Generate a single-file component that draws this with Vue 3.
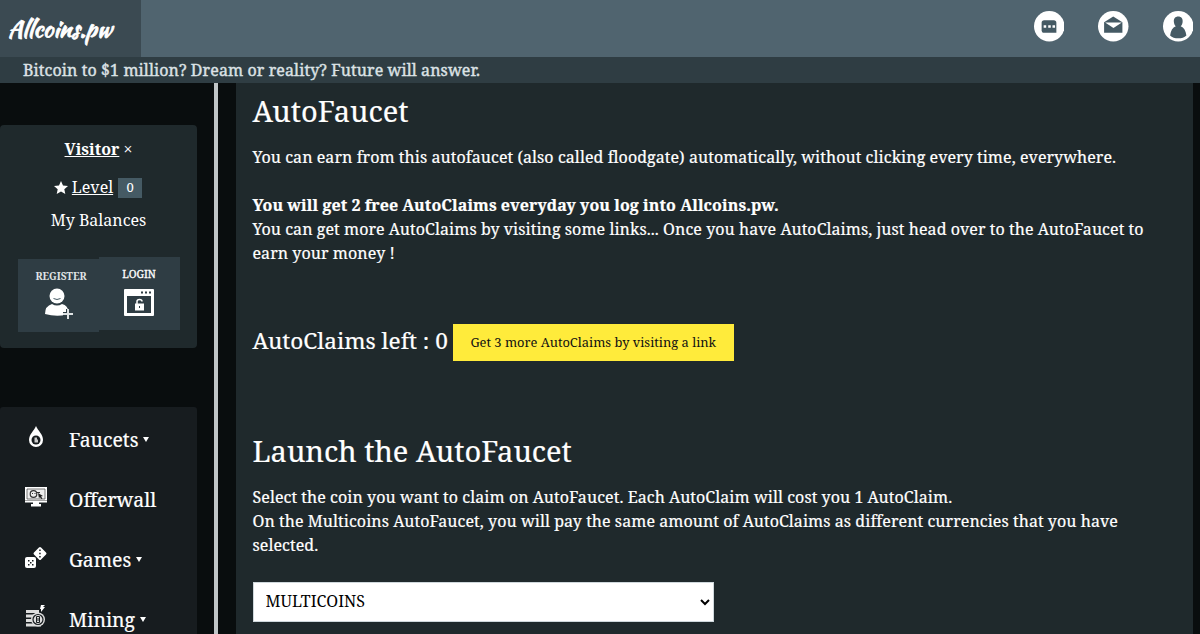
<template>
    <div class="page">
        <header class="topbar">
            <a class="logo"><span>Allcoins.pw</span></a>
            <nav class="actions">
                <svg viewBox="0 0 30 30">
                    <circle cx="15" cy="15" r="15" fill="#fff" />
                    <path d="M10 9h9.500q2.500 0 2.500 2.500v10h-12q-2.500 0-2.500-2.500v-7.500q0-2.500 2.500-2.500z" fill="#455a64" />
                    <path d="M9.500 14h2.500v2.500h-2.500zM14 14h2.500v2.500h-2.500zM18.200 14h2.500v2.500h-2.500z" fill="#fff" />
                </svg>
                <svg viewBox="0 0 30 30">
                    <circle cx="15" cy="15" r="15" fill="#fff" />
                    <path d="M6 11l9-5.500 9 5.500v10.500h-18z" fill="#455a64" />
                    <path d="M7 11.300h16.500l-8.300 5.500z" fill="#fff" />
                </svg>
                <svg viewBox="0 0 30 30">
                    <circle cx="15" cy="15" r="15" fill="#fff" />
                    <path d="M15 5.500c-3 0-4.700 2.200-4.300 5.200.2 1.800.8 3.300 1.900 4.300-3.200 1.300-5 4.500-5.600 9 3.500 3.800 12.500 3.800 16 0-.6-4.500-2.400-7.700-5.600-9 1.100-1 1.700-2.500 1.900-4.300.4-3-1.300-5.200-4.300-5.200z" fill="#455a64" />
                </svg>
            </nav>
        </header>
        <div class="ticker"><span>Bitcoin to $1 million? Dream or reality? Future will answer.</span></div>

        <div class="body">
            <aside class="sidebar">
                <section class="user">
                    <p class="visitor"><b>Visitor</b> <span>×</span></p>
                    <p class="level">
                        <svg viewBox="0 0 14 13"><path d="M7 0l2 4.500 5 .5-3.700 3.300 1 4.700-4.300-2.500-4.300 2.500 1-4.700-3.700-3.300 5-.5z" fill="#fff" /></svg>
                        <u>Level</u>
                        <span class="badge">0</span>
                    </p>
                    <p class="balances">My Balances</p>
                    <div class="auth">
                        <a class="register">
                            <span>REGISTER</span>
                            <svg viewBox="0 0 30 32">
                                <ellipse cx="13" cy="8" rx="7.500" ry="7.500" fill="#fff" />
                                <path d="M9.500 10.500q3.500 2 7 0" stroke="#455a64" fill="none" />
                                <path d="M1 26q0-8 7-10 5 3 10 0 6 1.500 6.500 8h-2.500v3q-11 2-21-1z" fill="#fff" />
                                <path d="M24 21v10M19 26h10" stroke="#2f3d44" stroke-width="4" />
                                <path d="M24 21v10M19 26h10" stroke="#dfe3e5" stroke-width="2" />
                            </svg>
                        </a>
                        <a class="login">
                            <span>LOGIN</span>
                            <svg viewBox="0 0 30 27">
                                <rect width="30" height="27" rx="1" fill="#fff" />
                                <path d="M3 7h24v17h-24z" fill="#2f3d44" />
                                <path d="M17 2.500h2v2h-2zM21 2.500h2v2h-2zM25 2.500h2v2h-2z" fill="#2f3d44" />
                                <path d="M11 14.500h9v7h-9z" fill="#fff" />
                                <path d="M13 15v-2.500q0-2 2.500-2t2.500 2" fill="none" stroke="#fff" stroke-width="1.500" />
                                <path d="M15 17h1v2h-1z" fill="#2f3d44" />
                            </svg>
                        </a>
                    </div>
                </section>

                <ul class="menu">
                    <li v-for="item in menu" :key="item.name">
                        <svg v-if="item.icon === 'drop'" viewBox="0 0 24 24">
                            <path d="M12 1c2 5 7 8 7 14a7 7 0 0 1-14 0c0-6 5-9 7-14z" fill="#fff" />
                            <circle cx="12" cy="15" r="4.500" fill="#171c1f" />
                            <path d="M10.500 12.500h2.500v2h1v3h-3.500z" fill="#ccc" />
                        </svg>
                        <svg v-else-if="item.icon === 'screen'" viewBox="0 0 24 24">
                            <path d="M1 2h22v15.500h-22zM9 17h6v2h2v2.500h-10v-2.500h2z" fill="#fff" />
                            <path d="M3 4h18v10h-18z" fill="#eee" stroke="#555" stroke-width=".8" />
                            <circle cx="9.500" cy="9" r="3.300" fill="none" stroke="#333" stroke-width="1.200" />
                            <path d="M8 8.500h1M10.500 8.500h1M13 7.500h3" stroke="#333" />
                            <path d="M14 8l5 3-2 .5 1.500 2-1.200.5-1.500-2-.8 1.500z" fill="#222" />
                            <path d="M1 15.500h22" stroke="#888" stroke-width=".8" />
                        </svg>
                        <svg v-else-if="item.icon === 'dice'" viewBox="0 0 24 24">
                            <rect x="1" y="12" width="11" height="11" rx="2" fill="#fff" />
                            <rect x="11" y="3.500" width="10" height="10" rx="1.500" transform="rotate(45 16 8.500)" fill="#fff" />
                            <path d="M4 15h1.500v1.500h-1.500zM8 15h1.500v1.500h-1.500zM4 19h1.500v1.500h-1.500zM8 19h1.500v1.500h-1.500zM6 17h1.500v1.500h-1.500zM15.200 4.500h1.500v1.500h-1.500zM15.200 7.800h1.500v1.500h-1.500zM15.200 11h1.500v1.500h-1.500z" fill="#171c1f" />
                        </svg>
                        <svg v-else viewBox="0 0 24 24">
                            <path d="M2 5h13v3h-13zM2 9.500h13v3h-13zM2 14h13v3h-13zM2 18.500h15v3h-15z" fill="#ddd" />
                            <circle cx="14" cy="14.500" r="7" fill="#ddd" />
                            <circle cx="14" cy="14.500" r="5" fill="none" stroke="#171c1f" stroke-width="1.200" />
                            <path d="M12.500 11.500h3v6h-3zM14 13v3" fill="none" stroke="#171c1f" />
                            <path d="M17 0h4l-2 2h2l-4 5v-3h-1z" fill="#fff" />
                        </svg>
                        <span>{{ item.name }}</span>
                        <i v-if="item.sub"></i>
                    </li>
                </ul>
            </aside>

            <main class="content">
                <h2>AutoFaucet</h2>
                <div class="text">
                    <p>You can earn from this autofaucet (also called floodgate) automatically, without clicking every time, everywhere.</p>
                    <p>&nbsp;</p>
                    <p><b>You will get 2 free AutoClaims everyday you log into Allcoins.pw.</b></p>
                    <p>You can get more AutoClaims by visiting some links... Once you have AutoClaims, just head over to the AutoFaucet to</p>
                    <p>earn your money !</p>
                </div>
                <div class="claims">
                    <h3>AutoClaims left : 0</h3>
                    <button>Get 3 more AutoClaims by visiting a link</button>
                </div>
                <h2>Launch the AutoFaucet</h2>
                <div class="text">
                    <p>Select the coin you want to claim on AutoFaucet. Each AutoClaim will cost you 1 AutoClaim.</p>
                    <p>On the Multicoins AutoFaucet, you will pay the same amount of AutoClaims as different currencies that you have</p>
                    <p>selected.</p>
                </div>
                <select v-model="coin">
                    <option>MULTICOINS</option>
                </select>
            </main>
        </div>
    </div>
</template>

<script setup>
import { ref } from "vue";

const coin = ref("MULTICOINS");
const menu = [
    { name: "Faucets", icon: "drop", sub: true },
    { name: "Offerwall", icon: "screen", sub: false },
    { name: "Games", icon: "dice", sub: true },
    { name: "Mining", icon: "coin", sub: true },
];
</script>

<style>
body {
    margin: 0;
    overflow: hidden;
    background: #090d0e;
}
</style>

<style scoped>
.page {
    height: 634px;
    overflow: hidden;
    display: flex;
    flex-direction: column;
    color: #fff;
    font-family: "Noto Serif", "Droid Serif", "DejaVu Serif Condensed", "DejaVu Serif", serif;
    font-stretch: condensed;
    font-size: 16px;
    white-space: nowrap;
}
p,
h2,
h3,
ul {
    margin: 0;
    padding: 0;
    font-weight: normal;
}
.topbar {
    height: 57px;
    flex: none;
    display: flex;
    justify-content: space-between;
    background: #50646f;
}
.logo {
    width: 141px;
    box-sizing: border-box;
    padding-left: 8px;
    background: #3b4a52;
}
.logo span {
    font: 400 23px/58px "Kaushan Script", Lato, sans-serif;
    letter-spacing: 0.150px;
    -webkit-text-stroke: 0.8px #fff;
}
.actions {
    display: flex;
    gap: 34px;
    padding: 11px 7px 0 0;
}
.actions svg {
    width: 30.500px;
    height: 30.500px;
}
.ticker {
    height: 26px;
    flex: none;
    padding-left: 23px;
    background: #2f3d43;
    color: #dce2e5;
    line-height: 26px;
    letter-spacing: 0.100px;
    -webkit-text-stroke: 0.4px #dce2e5;
}
.body {
    flex: 1;
    display: flex;
    min-height: 0;
}
.sidebar {
    width: 214px;
    flex: none;
    border-right: 4.500px solid #c0c5c7;
}
.user {
    width: 197px;
    height: 223px;
    margin-top: 42px;
    box-sizing: border-box;
    padding-top: 12px;
    border-radius: 4px;
    background: #1f292c;
    text-align: center;
}
.visitor {
    line-height: 24px;
}
.visitor b {
    text-decoration: underline;
}
.level {
    display: flex;
    align-items: center;
    justify-content: center;
    height: 24px;
    margin: 14px 1px 0 0;
}
.level svg {
    width: 14px;
    height: 13px;
    margin-right: 4px;
}
.badge {
    width: 24px;
    height: 20px;
    margin: 2px 0 0 5px;
    background: #455a64;
    font-size: 13px;
    line-height: 19px;
}
.balances {
    margin-top: 9px;
    line-height: 24px;
}
.auth {
    display: flex;
    margin: 25px 0 0 18px;
}
.auth a {
    display: flex;
    flex-direction: column;
    align-items: center;
    width: 81px;
    height: 73px;
    background: #2f3d44;
    font-size: 10px;
}
.auth span {
    margin-top: 10px;
    line-height: 14px;
}
.auth .register {
    height: 73px;
    margin-top: 2px;
    font-weight: bold;
    color: #dfe3e5;
}
.register span {
    margin-left: 5px;
}
.register svg {
    width: 30px;
    height: 32px;
    margin-top: 5px;
}
.login span {
    margin-right: 1px;
    font-size: 10.500px;
    -webkit-text-stroke: 0.3px #fff;
}
.login svg {
    width: 30px;
    height: 27px;
    margin: 8px 2px 0 0;
}
.menu {
    width: 197px;
    height: 240px;
    margin-top: 59px;
    padding-top: 2px;
    border-radius: 3px;
    background: #171c1f;
    list-style: none;
}
.menu li {
    display: flex;
    align-items: center;
    height: 60px;
    font-size: 19.400px;
    -webkit-text-stroke: 0.2px #fff;
}
.menu svg {
    width: 24px;
    height: 24px;
    margin: 0 21px 4px 24px;
}
.menu i {
    margin-left: 5px;
    border: 3.500px solid transparent;
    border-top: 5.500px solid #fff;
    border-bottom: 0;
}
.content {
    width: 957px;
    box-sizing: border-box;
    margin-left: 17.500px;
    padding: 7px 0 0 17px;
    background: #1f292c;
}
h2 {
    font-size: 29px;
    line-height: 42px;
    -webkit-text-stroke: 0.2px #fff;
}
.text {
    margin-top: 13px;
    line-height: 24.100px;
    letter-spacing: 0.058px;
    -webkit-text-stroke: 0.2px #fff;
}
.claims {
    display: flex;
    height: 37px;
    margin-top: 58.500px;
}
h3 {
    font-size: 22.600px;
    line-height: 34px;
    -webkit-text-stroke: 0.2px #fff;
}
button {
    width: 281px;
    height: 37px;
    margin-left: 5px;
    padding: 0;
    border: 0;
    background: #ffeb3b;
    color: #111;
    font-family: inherit;
    font-stretch: condensed;
    font-size: 12.900px;
}
.claims + h2 {
    margin-top: 69px;
}
select {
    display: block;
    width: 461px;
    height: 40px;
    margin-top: 25px;
    padding: 0 8px 2px;
    border: 1px solid #cfd8dc;
    background: #fff;
    color: #000;
    font-family: inherit;
    font-stretch: condensed;
    font-size: 16px;
}
</style>
